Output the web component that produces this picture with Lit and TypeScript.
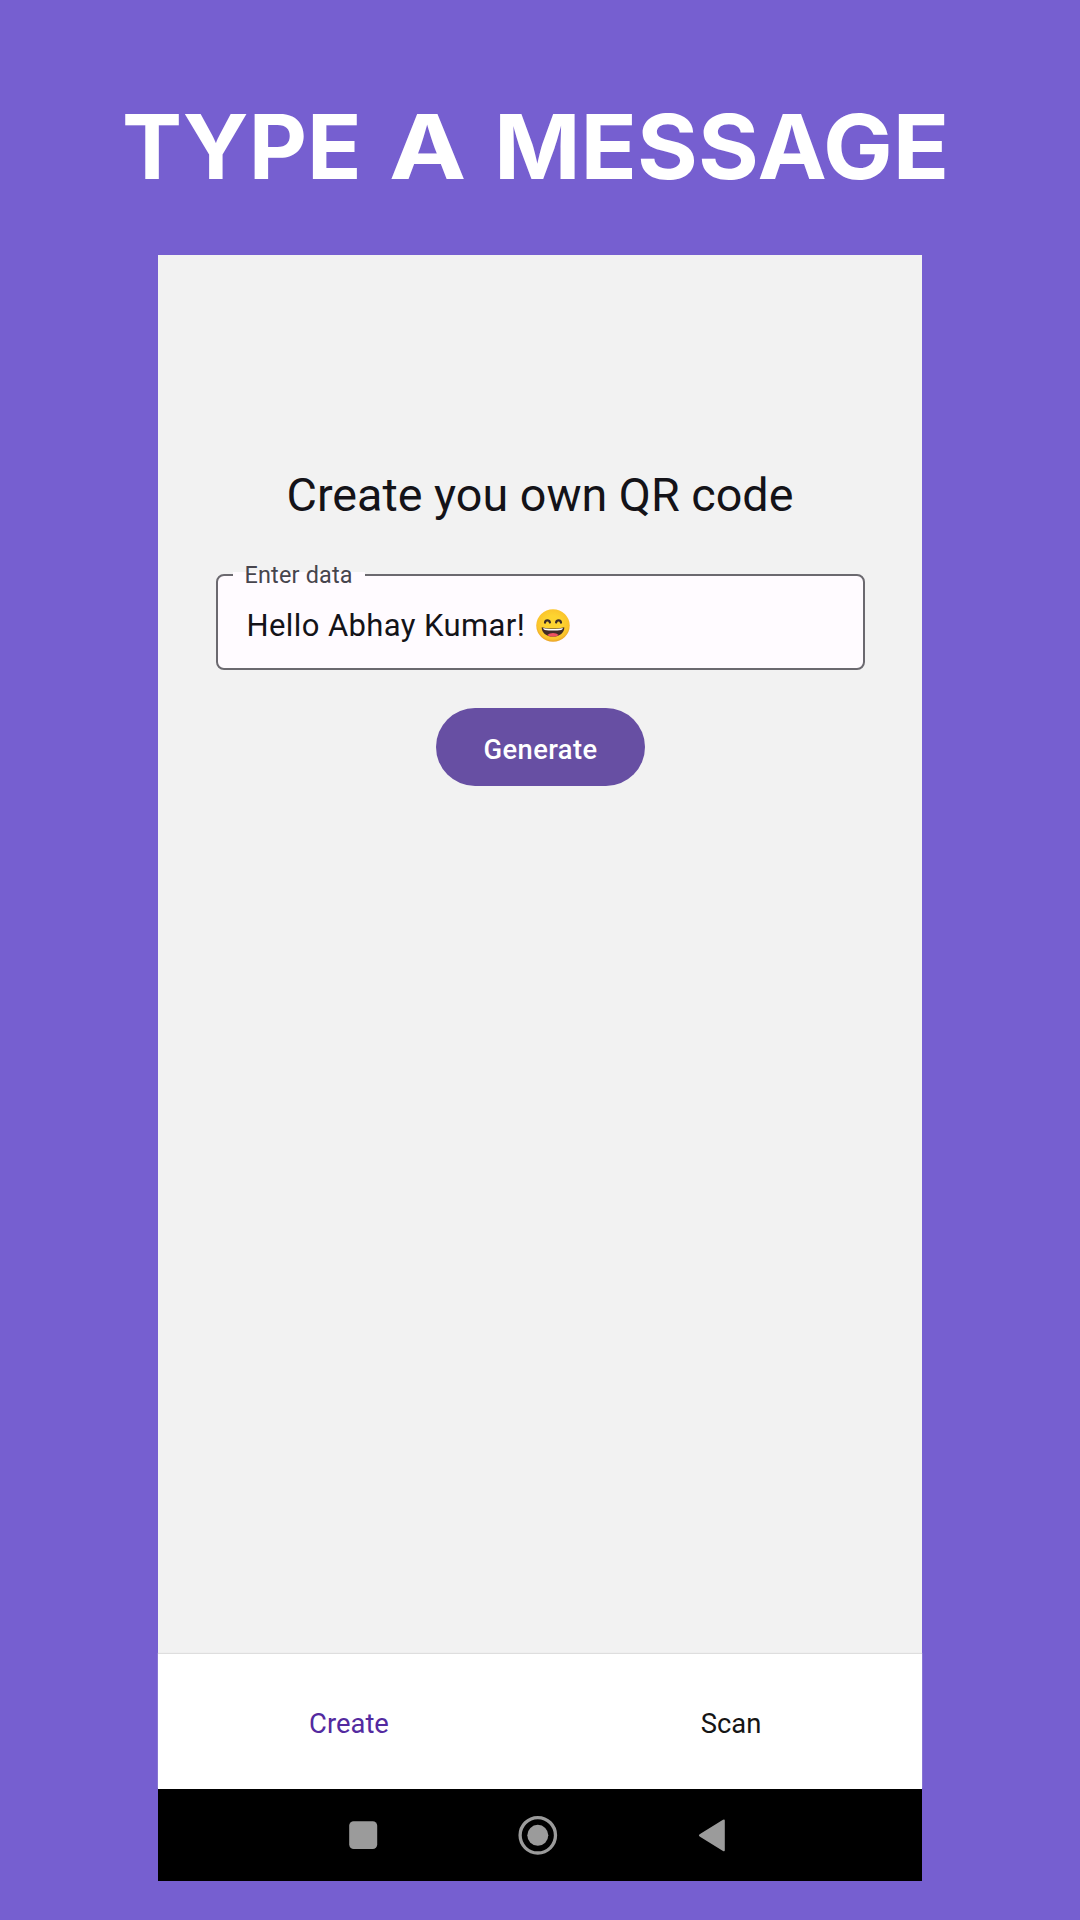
import { LitElement, html, css } from "lit";
import { customElement, property } from "lit/decorators.js";

@customElement("data-field")
class DataField extends LitElement {
  @property() label = "";
  @property() value = "";
  static styles = css`
    :host { display: block; }
    .box {
      position: relative; box-sizing: border-box; height: 96px;
      border: 2px solid #6b696f; border-radius: 8px; background: #fffbff;
      display: flex; align-items: center; padding: 7px 29px 0 29px;
    }
    .label {
      position: absolute; left: 15px; top: -4px; height: 14px; width: 132px; box-sizing: border-box;
      padding-left: 12px; background: #fffbff; color: #47454d;
      font-size: 23.4px; line-height: 6px; letter-spacing: 0.2px; white-space: nowrap;
    }
    .value { font-size: 31px; letter-spacing: 0.4px; color: #141318; white-space: pre; line-height: 40px; }
    .emoji { display: inline-block; vertical-align: -6px; margin-left: 11px; }
  `;
  render() {
    return html`<div class="box">
      <span class="label">${this.label}</span>
      <span class="value">${this.value}<svg class="emoji" width="34" height="33" viewBox="0 0 34 33" role="img" aria-label="😄">
        <defs><radialGradient id="face" cx="50%" cy="45%" r="55%">
          <stop offset="0.45" stop-color="#fdd430"/><stop offset="0.85" stop-color="#fbc42c"/><stop offset="1" stop-color="#e9a128"/>
        </radialGradient></defs>
        <ellipse cx="17" cy="16.5" rx="16.7" ry="16.2" fill="url(#face)"/>
        <path d="M9 13.700c.4-3 4.300-3 4.900-.3M20.100 13.400c.6-2.700 4.500-2.700 4.900.3" fill="none" stroke="#3b2c28" stroke-width="2.200" stroke-linecap="round"/>
        <path d="M5.700 18.200c5.800 1.800 16.800 1.800 22.600 0 .2 5.400-4.600 9.400-11.300 9.400S5.500 23.600 5.700 18.200z" fill="#412b27"/>
        <path d="M7.200 19c5.600 1.300 14 1.300 19.600 0 0 .8-.5 1.600-1.500 1.900-5 .8-11.600.8-16.600 0-1-.3-1.500-1.100-1.500-1.900z" fill="#fff"/>
        <path d="M11.300 26c2.800-2.800 8.600-2.800 11.400 0-3 2-8.400 2-11.400 0z" fill="#ef5062"/>
      </svg></span>
    </div>`;
  }
}

@customElement("system-nav")
class SystemNav extends LitElement {
  static styles = css`
    :host { display: flex; height: 92px; background: #000; }
    .icons { display: block; width: 764px; height: 92px; }
  `;
  render() {
    return html`<svg class="icons" viewBox="0 0 764 92" fill="#9b9b9b">
      <rect x="191.200" y="32.200" width="28" height="27.800" rx="4.500"/>
      <circle cx="379.800" cy="46.300" r="17.700" fill="none" stroke="#9b9b9b" stroke-width="3.300"/>
      <circle cx="379.800" cy="46.300" r="10.500"/>
      <path d="M542 45l23-14.300q1.800-.9 1.800.8v29.700q0 1.700-1.800.8L542 47.700q-2.200-1.400 0-2.700z"/>
    </svg>`;
  }
}

@customElement("app-root")
class AppRoot extends LitElement {
  static styles = css`
    :host {
      display: flex; flex-direction: column; align-items: center;
      box-sizing: border-box; width: 1080px; height: 1920px; overflow: hidden;
      background: #765fd0; font-family: Roboto, "Noto Sans", sans-serif;
    }
    .banner {
      margin: 0; height: 255px; width: 1080px; box-sizing: border-box; padding: 92px 0 0 122px;
      display: grid; grid-template-columns: 266.5px 105px auto; justify-content: start; align-content: start;
      font: 700 90px/110px Inter, sans-serif; color: #fff; white-space: nowrap;
    }
    .word { transform-origin: left; }
    .short { transform: scaleX(1.15); width: max-content; }
    .long { transform: scaleX(1.033); }
    .phone { width: 764px; height: 1626px; display: flex; flex-direction: column; background: #f2f2f2; }
    .screen { flex: 1; display: flex; flex-direction: column; align-items: center; padding-top: 210px; }
    .title { margin: 0; font-weight: 400; font-size: 46.700px; line-height: 60px; color: #141318; white-space: nowrap; }
    .field { width: 649px; margin-top: 49px; }
    .button {
      margin-top: 38px; width: 209px; height: 78px; border: 0; border-radius: 39px; padding: 6px 0 0 1px;
      background: #674fa3; color: #fff; font: 500 27.300px/32px Roboto, sans-serif; letter-spacing: 0.4px;
    }
    .tabs { height: 135px; background: #fff; display: flex; box-shadow: 0 -1px 1px #dedede; }
    .tab {
      flex: 1; display: flex; align-items: center; justify-content: center;
      padding-top: 5px; box-sizing: border-box; font-size: 27.400px; color: #151515;
    }
    .active { color: #532aa0; }
  `;
  render() {
    return html`
      <h1 class="banner"><span class="word">TYPE</span><span class="word short">A</span><span class="word long">MESSAGE</span></h1>
      <main class="phone">
        <section class="screen">
          <h2 class="title">Create you own QR code</h2>
          <data-field class="field" label="Enter data" value="Hello Abhay Kumar!"></data-field>
          <button class="button">Generate</button>
        </section>
        <nav class="tabs"><span class="tab active">Create</span><span class="tab">Scan</span></nav>
        <system-nav></system-nav>
      </main>`;
  }
}
